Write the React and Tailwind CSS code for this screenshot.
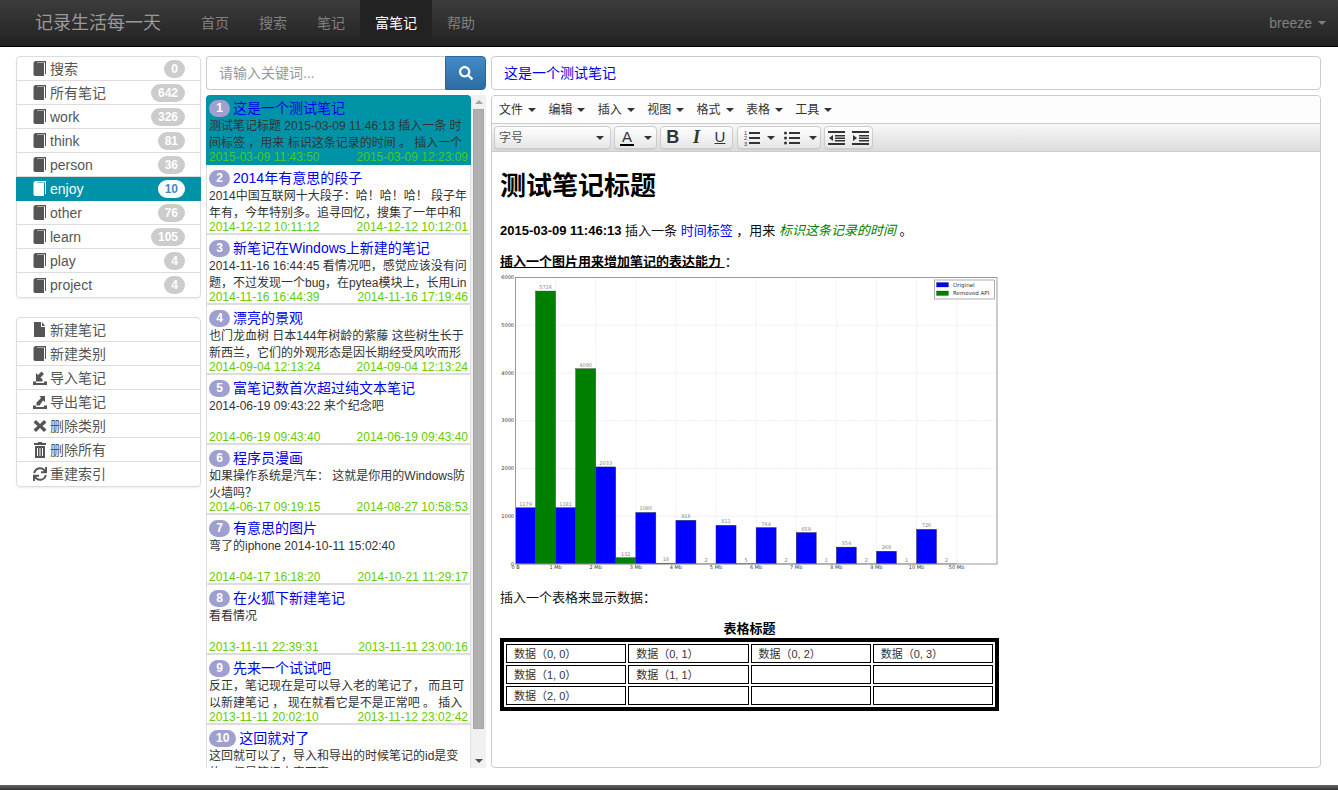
import React from "react";
import { FaSearch, FaSync } from "react-icons/fa";

const categories = [
	{ name: "搜索", count: 0 },
	{ name: "所有笔记", count: 642 },
	{ name: "work", count: 326 },
	{ name: "think", count: 81 },
	{ name: "person", count: 36 },
	{ name: "enjoy", count: 10, active: true },
	{ name: "other", count: 76 },
	{ name: "learn", count: 105 },
	{ name: "play", count: 4 },
	{ name: "project", count: 4 },
];

const notes = [
	{ title: "这是一个测试笔记", lines: ["测试笔记标题 2015-03-09 11:46:13 插入一条 时", "间标签 ，用来 标识这条记录的时间 。 插入一个"], created: "2015-03-09 11:43:50", updated: "2015-03-09 12:23:09", active: true },
	{ title: "2014年有意思的段子", lines: ["2014中国互联网十大段子：哈！哈！哈！ 段子年", "年有，今年特别多。追寻回忆，搜集了一年中和"], created: "2014-12-12 10:11:12", updated: "2014-12-12 10:12:01" },
	{ title: "新笔记在Windows上新建的笔记", lines: ["2014-11-16 16:44:45 看情况吧，感觉应该没有问", "题，不过发现一个bug，在pytea模块上，长用Lin"], created: "2014-11-16 16:44:39", updated: "2014-11-16 17:19:46" },
	{ title: "漂亮的景观", lines: ["也门龙血树 日本144年树龄的紫藤 这些树生长于", "新西兰，它们的外观形态是因长期经受风吹而形"], created: "2014-09-04 12:13:24", updated: "2014-09-04 12:13:24" },
	{ title: "富笔记数首次超过纯文本笔记", lines: ["2014-06-19 09:43:22 来个纪念吧", ""], created: "2014-06-19 09:43:40", updated: "2014-06-19 09:43:40" },
	{ title: "程序员漫画", lines: ["如果操作系统是汽车： 这就是你用的Windows防", "火墙吗？"], created: "2014-06-17 09:19:15", updated: "2014-08-27 10:58:53" },
	{ title: "有意思的图片", lines: ["弯了的iphone 2014-10-11 15:02:40", ""], created: "2014-04-17 16:18:20", updated: "2014-10-21 11:29:17" },
	{ title: "在火狐下新建笔记", lines: ["看看情况", ""], created: "2013-11-11 22:39:31", updated: "2013-11-11 23:00:16" },
	{ title: "先来一个试试吧", lines: ["反正，笔记现在是可以导入老的笔记了， 而且可", "以新建笔记 ， 现在就看它是不是正常吧 。 插入"], created: "2013-11-11 20:02:10", updated: "2013-11-12 23:02:42" },
	{ title: "这回就对了", lines: ["这回就可以了，导入和导出的时候笔记的id是变", "的，但是笔记内容不变"] },
];

const BookIcon = ({ className = "fill-[#555]" }) => (
	<svg width="14" height="15" viewBox="0 0 14 15" className={className}>
		<path d="M3 0H13V13H12V1.5H4V2H11V15H2.5C1 15 0.5 14 0.5 13V2.5C0.5 1 1.5 0 3 0Z" />
	</svg>
);

const FileIcon = () => (
	<svg width="14" height="15" viewBox="0 0 14 15" className="fill-[#555]">
		<path d="M1 0H8V5H12V15H1Z M9 0L12 4H9Z" />
	</svg>
);

const ImportIcon = () => (
	<svg width="14" height="15" viewBox="0 0 14 15" className="fill-[#555]">
		<path d="M0 11.5H3V13H11V11.5H14V15H0Z M3 3L5 5L8.5 1.5L11 4L7.5 7.5L9.5 9.5V11.5H3Z" />
	</svg>
);

const ExportIcon = () => (
	<svg width="14" height="15" viewBox="0 0 14 15" className="fill-[#555]">
		<path d="M0 11.5H3V13H11V11.5H14V15H0Z M12 2V8L10 6.5L6.5 11.5H3.5V8.5L8 4L6.5 2Z" />
	</svg>
);

const RemoveIcon = () => (
	<svg width="14" height="14" viewBox="0 0 14 14" className="fill-[#555]">
		<path d="M3 1L7 5L11 1L13.5 3.5L9.5 7L13.5 10.5L11 13L7 9L3 13L0.5 10.5L4.5 7L0.5 3.5Z" />
	</svg>
);

const TrashIcon = () => (
	<svg width="14" height="16" viewBox="0 0 14 16" className="fill-[#555]">
		<path d="M5 0H9V1H13V3H1V1H5Z M2 4H12V16H2ZM4 6V14H5V6ZM6.5 6V14H7.5V6ZM9 6V14H10V6Z" fillRule="evenodd" />
	</svg>
);

const actions = [
	{ name: "新建笔记", icon: <FileIcon /> },
	{ name: "新建类别", icon: <BookIcon /> },
	{ name: "导入笔记", icon: <ImportIcon /> },
	{ name: "导出笔记", icon: <ExportIcon /> },
	{ name: "删除类别", icon: <RemoveIcon /> },
	{ name: "删除所有", icon: <TrashIcon /> },
	{ name: "重建索引", icon: <FaSync size={14} className="text-[#555]" /> },
];

const Caret = ({ className = "border-t-[#333]" }) => (
	<span className={`inline-block w-0 h-0 border-x-4 border-x-transparent border-t-4 ${className}`} />
);

const ToolButton = ({ className = "", children }) => (
	<div className={`h-[22px] flex items-center justify-center ${className}`}>{children}</div>
);

const Group = ({ children }) => (
	<div className="flex h-[23px] items-center rounded border border-[#ccc] bg-linear-to-b from-white to-[#e6e6e6] shadow-[0_1px_1px_rgba(0,0,0,0.08)]">
		{children}
	</div>
);

const OrderedIcon = () => (
	<svg width="16" height="16" viewBox="0 0 16 16" className="fill-[#333]">
		<rect x="5" y="2" width="11" height="2" />
		<rect x="5" y="7" width="11" height="2" />
		<rect x="5" y="12" width="11" height="2" />
		<text x="0" y="5" fontSize="5.5">1</text>
		<text x="0" y="10" fontSize="5.5">2</text>
		<text x="0" y="15.5" fontSize="5.5">3</text>
	</svg>
);

const BulletIcon = () => (
	<svg width="16" height="16" viewBox="0 0 16 16" className="fill-[#333]">
		<rect x="5" y="2" width="11" height="2" />
		<rect x="5" y="7" width="11" height="2" />
		<rect x="5" y="12" width="11" height="2" />
		<circle cx="1.5" cy="3" r="1.5" />
		<circle cx="1.5" cy="8" r="1.5" />
		<circle cx="1.5" cy="13" r="1.5" />
	</svg>
);

const IndentIcon = ({ flip }) => (
	<svg width="17" height="16" viewBox="0 0 17 16" className="fill-[#333]">
		<rect x="0" y="1" width="17" height="2" />
		<rect x="0" y="13" width="17" height="2" />
		<rect x="7" y="5" width="10" height="1.5" />
		<rect x="7" y="7.5" width="10" height="1.5" />
		<rect x="7" y="10" width="10" height="1.5" />
		<path d={flip ? "M1 5L5 8L1 11Z" : "M5 5L1 8L5 11Z"} />
	</svg>
);

// bars of the picture in the note
const blueBars = [1179, 1181, 2033, 1080, 916, 811, 764, 659, 354, 268, 726];
const greenBars = [5716, 4090, 132, 18, 2, 5, 2, 1, 2, 1, 2];
const xLabels = ["0 B", "1 Mb", "2 Mb", "3 Mb", "4 Mb", "5 Mb", "6 Mb", "7 Mb", "8 Mb", "9 Mb", "10 Mb", "50 Mb"];

const Chart = () => {
	const left = 15.5;
	const top = 0.5;
	const step = 40.1;
	const bottom = 287;
	const scale = 286.5 / 6000;
	const right = 497;
	return (
		<svg width="498" height="292" viewBox="0 0 498 292" className="block overflow-visible" fontFamily="'DejaVu Sans', sans-serif">
			{[1, 2, 3, 4, 5, 6, 7, 8, 9, 10, 11].map((i) => (
				<line key={i} x1={left + i * step} x2={left + i * step} y1={top} y2={bottom} stroke="#ddd" strokeWidth="0.6" strokeDasharray="1.5 1" />
			))}
			{[1000, 2000, 3000, 4000, 5000].map((v) => (
				<line key={v} x1={left} x2={right} y1={bottom - v * scale} y2={bottom - v * scale} stroke="#ddd" strokeWidth="0.6" strokeDasharray="1.5 1" />
			))}
			{blueBars.map((v, i) => (
				<g key={i}>
					<rect x={left + i * step} y={bottom - v * scale} width={step / 2} height={v * scale} fill="#0000ff" stroke="#333" strokeWidth="0.4" />
					<text x={left + (i + 0.25) * step} y={bottom - v * scale - 2} fontSize="5" fill="#888" textAnchor="middle">{v}</text>
				</g>
			))}
			{greenBars.map((v, i) => (
				<g key={i}>
					<rect x={left + (i + 0.5) * step} y={bottom - v * scale} width={step / 2} height={v * scale} fill="#008000" stroke="#333" strokeWidth="0.4" />
					<text x={left + (i + 0.75) * step} y={bottom - v * scale - 2} fontSize="5" fill="#888" textAnchor="middle">{v}</text>
				</g>
			))}
			<rect x={left} y={top} width={right - left} height={bottom - top} fill="none" stroke="#999" strokeWidth="1" />
			{[0, 1000, 2000, 3000, 4000, 5000, 6000].map((v) => (
				<text key={v} x={left - 1.5} y={bottom - v * scale + 1.5} fontSize="5" fill="#333" textAnchor="end">{v}</text>
			))}
			{xLabels.map((l, i) => (
				<text key={l} x={left + i * step} y={bottom + 5} fontSize="5" fill="#333" textAnchor="middle">{l}</text>
			))}
			<rect x="434.5" y="3" width="60" height="19" fill="#fff" stroke="#999" strokeWidth="0.8" />
			<rect x="436.5" y="5.5" width="12" height="4.5" fill="#0000ff" stroke="#333" strokeWidth="0.3" />
			<rect x="436.5" y="14" width="12" height="4.5" fill="#008000" stroke="#333" strokeWidth="0.3" />
			<text x="453" y="9.5" fontSize="5.5" fill="#333">Original</text>
			<text x="453" y="18" fontSize="5.5" fill="#333">Removed API</text>
		</svg>
	);
};

const tableRows = [
	["数据（0, 0）", "数据（0, 1）", "数据（0, 2）", "数据（0, 3）"],
	["数据（1, 0）", "数据（1, 1）", "", ""],
	["数据（2, 0）", "", "", ""],
];

const NoteItem = ({ note, index }) => (
	<div className={`h-[70px] shrink-0 border-b-2 text-xs ${note.active ? "bg-[#0093a8] border-[#0093a8] rounded-t px-[3px]" : "border-[#ddd] border-x border-x-[#ddd] px-[2px]"}`}>
		<div className="flex items-center h-[22px] pt-[4px]">
			<span className="mr-[3px] h-[17px] min-w-[21px] px-[7px] rounded-full bg-[#a0a0d0] text-white font-bold text-xs leading-[17px] text-center">{index + 1}</span>
			<span className="text-sm text-[#0000ee] whitespace-nowrap">{note.title}</span>
		</div>
		<div className="text-[#333] leading-[17px] h-[33px] mt-[1px] whitespace-nowrap">
			{note.lines.map((line, i) => (
				<div key={i} className="h-[17px]">{line}</div>
			))}
		</div>
		{note.created && (
			<div className={`flex justify-between h-[13px] -mt-[1px] leading-[15px] ${note.active ? "text-[#44cc22]" : "text-[#66cc00]"}`}>
				<span>{note.created}</span>
				<span>{note.updated}</span>
			</div>
		)}
	</div>
);

const App = () => {
	return (
		<div className="h-[790px] overflow-hidden bg-white flex flex-col text-[#333] font-['Liberation_Sans','Noto_Sans_CJK_SC',sans-serif]">
			{/* navbar */}
			<div className="h-[47px] shrink-0 flex items-stretch justify-between bg-linear-to-b from-[#3c3c3c] to-[#222] border-b border-black">
				<div className="flex items-stretch">
					<div className="pl-[35px] w-[186px] flex items-center text-[#999] text-lg">记录生活每一天</div>
					{["首页", "搜索", "笔记", "富笔记", "帮助"].map((item) => (
						<div key={item} className={`px-[15px] flex items-center text-sm ${item === "富笔记" ? "bg-[#222] text-white" : "text-[#808080]"}`}>
							{item}
						</div>
					))}
				</div>
				<div className="flex items-center gap-[6px] pr-[12px] text-sm text-[#808080]">
					breeze
					<Caret className="border-t-[#808080]" />
				</div>
			</div>

			<div className="flex-1 min-h-0 flex pt-[9px] pl-[16px] pr-[17px] pb-[17px]">
				{/* left column */}
				<div className="w-[185px] shrink-0 mr-[5px]">
					<div className="rounded border border-[#ddd] shadow-[0_1px_2px_rgba(0,0,0,0.08)]">
						{categories.map((c, i) => (
							<div
								key={c.name}
								className={`h-[24px] flex items-center text-sm border-b last:border-b-0 ${c.active ? "bg-[#0093a8] text-white border-[#0093a8] -mx-px pl-[17px] pr-[16px]" : "text-[#555] border-[#ddd] pl-[16px] pr-[15px]"} ${i === 0 ? "rounded-t" : ""}`}
							>
								<BookIcon className={c.active ? "fill-white" : "fill-[#555]"} />
								<span className="ml-[3px] flex-1">{c.name}</span>
								<span className={`h-[18px] px-[7px] rounded-full text-xs font-bold leading-[18px] ${c.active ? "bg-white text-[#428bca]" : "bg-[#ccc] text-white"}`}>
									{c.count}
								</span>
							</div>
						))}
					</div>
					<div className="mt-[19px] rounded border border-[#ddd] shadow-[0_1px_2px_rgba(0,0,0,0.08)]">
						{actions.map((a) => (
							<div key={a.name} className="h-[24px] flex items-center pl-[16px] text-sm text-[#555] border-b border-[#ddd] last:border-b-0">
								<span className="w-[14px] flex justify-center">{a.icon}</span>
								<span className="ml-[3px]">{a.name}</span>
							</div>
						))}
					</div>
				</div>

				{/* note list */}
				<div className="w-[280px] shrink-0 mr-[5px] flex flex-col min-h-0">
					<div className="h-[34px] shrink-0 flex">
						<div className="flex-1 rounded-l border border-[#ccc] border-r-0 pl-[12px] flex items-center text-sm text-[#999]">请输入关键词...</div>
						<div className="w-[41px] rounded-r bg-linear-to-b from-[#428bca] to-[#2d6ca2] border border-[#2b669a] flex items-center justify-center">
							<FaSearch size={14} className="text-white" />
						</div>
					</div>
					<div className="mt-[5px] flex-1 min-h-0 flex">
						<div className="w-[265px] overflow-hidden flex flex-col">
							{notes.map((n, i) => (
								<NoteItem key={i} note={n} index={i} />
							))}
						</div>
						<div className="w-[15px] bg-[#f1f1f1] flex flex-col items-center">
							<div className="h-[14px] flex items-center">
								<span className="w-0 h-0 border-x-[4px] border-x-transparent border-b-[4px] border-b-[#a3a3a3]" />
							</div>
							<div className="w-[11px] h-[620px] bg-[#b0b0b0] border border-[#999]/40" />
							<div className="flex-1" />
							<div className="h-[14px] flex items-center">
								<span className="w-0 h-0 border-x-[4px] border-x-transparent border-t-[4px] border-t-[#505050]" />
							</div>
						</div>
					</div>
				</div>

				{/* editor */}
				<div className="flex-1 min-w-0 flex flex-col">
					<div className="h-[34px] shrink-0 rounded border border-[#ccc] pl-[12px] flex items-center text-sm text-[#0000ee]">这是一个测试笔记</div>
					<div className="mt-[5px] flex-1 min-h-0 rounded border border-[#ccc] flex flex-col overflow-hidden">
						<div className="h-[28px] shrink-0 flex items-center pl-[7px] text-xs text-[#333] bg-[#fdfdfd] border-b border-[#ccc]">
							{["文件", "编辑", "插入", "视图", "格式", "表格", "工具"].map((m) => (
								<div key={m} className="w-[49.4px] flex items-center gap-[5px]">
									{m}
									<Caret />
								</div>
							))}
						</div>
						<div className="h-[28px] shrink-0 flex items-center pl-[2px] bg-linear-to-b from-[#f7f7f7] to-[#dcdcdc] border-b border-[#ccc]">
							<Group>
								<div className="w-[115px] h-[22px] flex items-center justify-between pl-[4px] pr-[6px] text-xs text-[#555]">
									字号
									<Caret />
								</div>
							</Group>
							<div className="ml-[3px]">
								<Group>
									<ToolButton className="w-[24px]">
										<span className="text-[15px] leading-[15px] border-b-2 border-black px-[2px] text-[#333]">A</span>
									</ToolButton>
									<ToolButton className="w-[17px]">
										<Caret />
									</ToolButton>
								</Group>
							</div>
							<div className="ml-[3px]">
								<Group>
									<ToolButton className="w-[23.6px] font-bold text-[18px]">B</ToolButton>
									<ToolButton className="w-[23.6px] italic font-bold text-[18px] font-['Liberation_Serif']">I</ToolButton>
									<ToolButton className="w-[23.6px] text-[15px] underline">U</ToolButton>
								</Group>
							</div>
							<div className="ml-[4px]">
								<Group>
									<ToolButton className="w-[26px] pl-[2px]"><OrderedIcon /></ToolButton>
									<ToolButton className="w-[14px]"><Caret /></ToolButton>
									<ToolButton className="w-[28px]"><BulletIcon /></ToolButton>
									<ToolButton className="w-[14px]"><Caret /></ToolButton>
								</Group>
							</div>
							<div className="ml-[3px]">
								<Group>
									<ToolButton className="w-[23.5px]"><IndentIcon /></ToolButton>
									<ToolButton className="w-[23.5px]"><IndentIcon flip /></ToolButton>
								</Group>
							</div>
						</div>
						<div className="flex-1 min-h-0 pl-[8px] text-[13px] text-[#111] overflow-hidden">
							<h1 className="mt-[16px] text-[26px] leading-[36px] font-bold text-black">测试笔记标题</h1>
							<p className="mt-[17px] leading-[20px]">
								<b className="text-black">2015-03-09 11:46:13</b> 插入一条 <span className="text-[#0000ff]">时间标签</span> ，用来 <i className="text-[#008000]">标识这条记录的时间</i> 。
							</p>
							<p className="mt-[11px] leading-[20px]">
								<b className="underline text-black">插入一个图片用来增加笔记的表达能力 </b>：
							</p>
							<div className="mt-[5px]">
								<Chart />
							</div>
							<p className="mt-[19px] leading-[20px]">插入一个表格来显示数据：</p>
							<table className="mt-[12px] w-[499px] border-separate border-spacing-[2px] border-4 border-black table-fixed text-[11px]">
								<caption className="font-bold text-[13px] text-black leading-[18px]">表格标题</caption>
								<tbody>
									{tableRows.map((row, r) => (
										<tr key={r}>
											{row.map((cell, c) => (
												<td key={c} className="h-[19px] border border-black pl-[7px] p-0 leading-[14px] text-[#333]">{cell}</td>
											))}
										</tr>
									))}
								</tbody>
							</table>
						</div>
					</div>
				</div>
			</div>

			{/* footer bar */}
			<div className="h-[5px] shrink-0 bg-linear-to-b from-[#666] to-[#333]" />
		</div>
	);
};

export default App;
